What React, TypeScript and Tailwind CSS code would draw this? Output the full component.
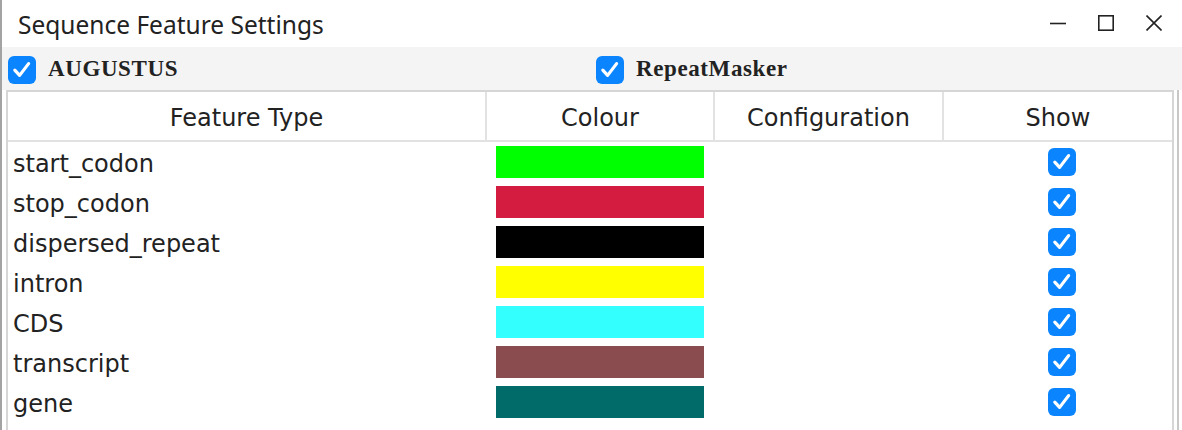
import React from 'react';

const features = [
  { name: 'start_codon', colour: '#00ff00' },
  { name: 'stop_codon', colour: '#d41c40' },
  { name: 'dispersed_repeat', colour: '#000000' },
  { name: 'intron', colour: '#ffff00' },
  { name: 'CDS', colour: '#33ffff' },
  { name: 'transcript', colour: '#8b4c4f' },
  { name: 'gene', colour: '#006b68' },
];

function Check() {
  return (
    <span className="w-[28px] h-[28px] rounded-[6px] bg-[#0a84ff] flex items-center justify-center shrink-0">
      <svg width="28" height="28" viewBox="0 0 28 28">
        <path d="M6.8 14.2 L11.6 19.4 L20.6 7.6" fill="none" stroke="white" strokeWidth="3.2" strokeLinecap="round" strokeLinejoin="round" />
      </svg>
    </span>
  );
}

export default function App() {
  const sans = { fontFamily: '"DejaVu Sans", Verdana, sans-serif' };
  return (
    <div className="w-[1182px] h-[430px] overflow-hidden bg-white flex">
      <div className="w-[2px] bg-[#a3a3a3] shrink-0" />
      <div className="flex-1 flex flex-col">
        {/* Title bar */}
        <div className="h-[47px] shrink-0 flex items-center justify-between bg-white">
          <span className="pl-[16px] pt-[4px] text-[24.5px] text-[#222]" style={{ fontFamily: '"Noto Sans", "Open Sans", sans-serif' }}>
            Sequence Feature Settings
          </span>
          <div className="flex items-center gap-[32px] pr-[20px] pb-[1px] text-[#222]">
            <svg width="16" height="16" viewBox="0 0 16 16">
              <path d="M0 8.5 H16" stroke="#222" strokeWidth="1.6" />
            </svg>
            <svg width="16" height="16" viewBox="0 0 16 16">
              <rect x="0.8" y="0.8" width="14.4" height="14.4" fill="none" stroke="#222" strokeWidth="1.6" />
            </svg>
            <svg width="16" height="16" viewBox="0 0 16 16">
              <path d="M0.5 0.5 L15.5 15.5 M15.5 0.5 L0.5 15.5" stroke="#222" strokeWidth="1.6" />
            </svg>
          </div>
        </div>

        {/* Source toggles */}
        <div className="h-[43px] shrink-0 bg-[#f4f4f4] grid grid-cols-[588px_1fr] items-start pt-[5px]">
          {['AUGUSTUS', 'RepeatMasker'].map((src) => (
            <label key={src} className="flex items-center gap-[12px] pl-[6px]">
              <Check />
              <span className="text-[23px] font-bold text-[#222] tracking-[0.6px] pb-[2px]" style={{ fontFamily: '"Liberation Serif", "Times New Roman", serif' }}>
                {src}
              </span>
            </label>
          ))}
        </div>

        {/* Table */}
        <div className="flex shrink-0">
          <div className="ml-[4px] w-[1168px] border-2 border-[#d6d6d6] border-b-0 text-[#222]" style={sans}>
            <div className="grid grid-cols-[479px_228px_229px_228px] h-[50px] border-b-2 border-[#e2e2e2] text-[24px]">
              <div className="flex items-center justify-center pt-[4px] border-r-2 border-[#e2e2e2]">Feature Type</div>
              <div className="flex items-center justify-center pt-[4px] border-r-2 border-[#e2e2e2]">Colour</div>
              <div className="flex items-center justify-center pt-[4px] border-r-2 border-[#e2e2e2]">Configuration</div>
              <div className="flex items-center justify-center pt-[4px]">Show</div>
            </div>
            {features.map((f) => (
              <div key={f.name} className="grid grid-cols-[479px_228px_229px_228px] h-[40px] text-[24px]">
                <div className="flex items-center pl-[5px] pt-[4px]">{f.name}</div>
                <div className="flex items-center pl-[9px]">
                  <div className="w-[208px] h-[32px]" style={{ backgroundColor: f.colour }} />
                </div>
                <div />
                <div className="flex items-center pl-[104px]">
                  <Check />
                </div>
              </div>
            ))}
            <div className="h-[10px]" />
          </div>
          <div className="w-[3px]" />
          <div className="w-[2px] bg-[#c8c8c8]" />
        </div>
      </div>
    </div>
  );
}
